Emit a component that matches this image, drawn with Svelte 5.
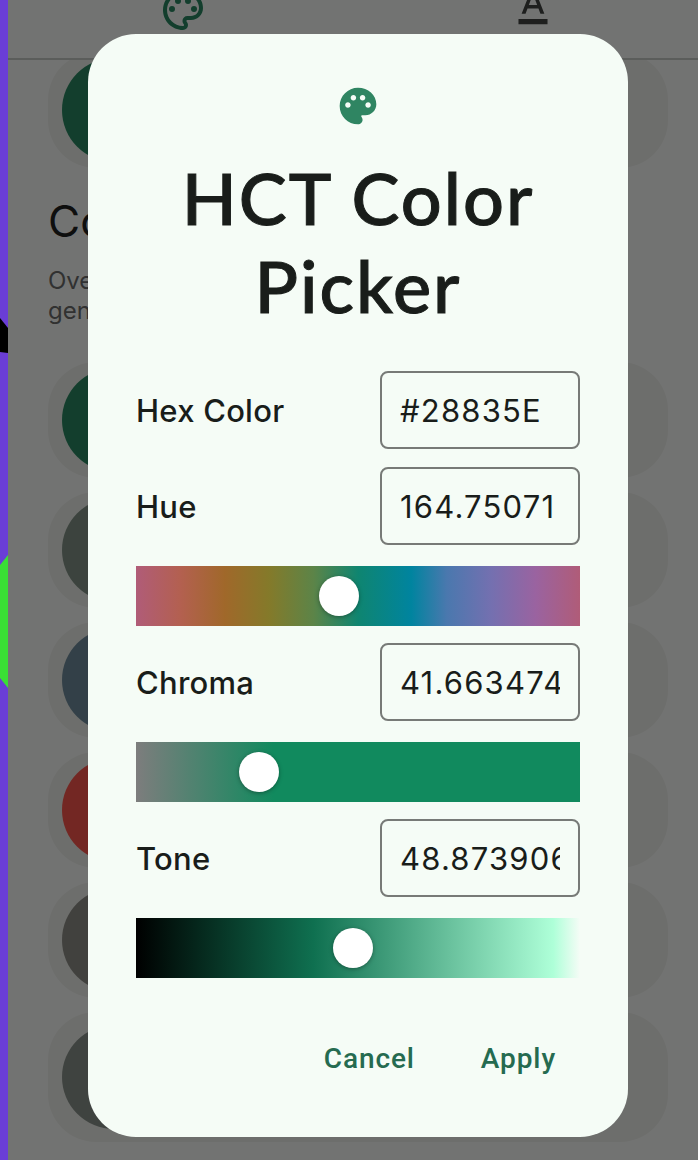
<script>
  const swatches = [
    { color: '#7d8d82', tall: false },
    { color: '#6c8796', tall: false },
    { color: '#f05349', tall: false },
    { color: '#898983', tall: false },
    { color: '#858c87', tall: true }
  ];

  const fields = [
    { label: 'Hex Color', value: '#28835E' },
    { label: 'Hue', value: '164.75071', slider: 'hue', pos: 164.75071 / 360 },
    { label: 'Chroma', value: '41.663474', slider: 'chroma', pos: 41.663474 / 150 },
    { label: 'Tone', value: '48.873906', slider: 'tone', pos: 48.873906 / 100 }
  ];

  const palette = 'M12 2C6.49 2 2 6.49 2 12s4.49 10 10 10c1.38 0 2.5-1.12 2.5-2.5 0-.61-.23-1.2-.64-1.67-.08-.1-.13-.21-.13-.33 0-.28.22-.5.5-.5H16c3.31 0 6-2.69 6-6 0-4.96-4.49-9-10-9zm5.5 11c-.83 0-1.5-.67-1.5-1.5s.67-1.5 1.5-1.5 1.5.67 1.5 1.5-.67 1.5-1.5 1.5zm-3-4c-.83 0-1.5-.67-1.5-1.5S13.67 6 14.5 6s1.5.67 1.5 1.5S15.33 9 14.5 9zM5 11.5c0-.83.67-1.5 1.5-1.5s1.5.67 1.5 1.5S7.33 13 6.5 13 5 12.33 5 11.5zm6-4c0 .83-.67 1.5-1.5 1.5S8 8.33 8 7.5 8.67 6 9.5 6s1.5.67 1.5 1.5z';
</script>

<div class="stage">
  <svg class="rail" viewBox="0 0 8 1160" width="8" height="1160" aria-hidden="true">
    <rect width="8" height="1160" fill="#6a3dd6" />
    <path d="M0 318 L8 328 V353 L0 352 Z" fill="#000" />
    <path d="M0 565 L8 555 V688 L0 678 Z" fill="#3adf35" />
  </svg>

  <div class="app">
    <header class="tabs">
      <svg class="tab-palette" viewBox="0 0 24 24" width="48" height="48" aria-hidden="true">
        <path d="M12 22C6.49 22 2 17.51 2 12S6.49 2 12 2s10 4.04 10 9c0 3.31-2.69 6-6 6h-1.77c-.28 0-.5.22-.5.5 0 .12.05.23.13.33.41.47.64 1.06.64 1.67A2.5 2.5 0 0 1 12 22zm0-18c-4.41 0-8 3.59-8 8s3.59 8 8 8c.28 0 .5-.22.5-.5a.54.54 0 0 0-.14-.35c-.41-.46-.63-1.05-.63-1.65a2.5 2.5 0 0 1 2.5-2.5H16c2.21 0 4-1.79 4-4 0-3.86-3.59-7-8-7z" />
        <circle cx="6.5" cy="11.5" r="1.5" />
        <circle cx="9.5" cy="7.5" r="1.5" />
        <circle cx="14.5" cy="7.5" r="1.5" />
        <circle cx="17.5" cy="11.5" r="1.5" />
      </svg>
      <svg class="tab-type" viewBox="0 0 24 24" width="42" height="42" aria-hidden="true">
        <path d="M11 3L5.5 17h2.25l1.12-3h6.25l1.12 3h2.25L13 3h-2zm-1.38 9L12 5.67 14.38 12H9.62z" />
        <rect x="3.7" y="20" width="16.6" height="3" />
      </svg>
    </header>

    <main class="content">
      <div class="card first"><span class="dot primary"></span></div>
      <h2 class="heading">Color scheme</h2>
      <p class="intro">
        <span>Override the colors of the default theme that are</span>
        <span>generated from the seed color.</span>
      </p>
      <div class="list">
        <div class="card"><span class="dot primary"></span></div>
        {#each swatches as s}
          <div class="card" class:tall={s.tall}>
            <span class="dot" style:background={s.color}></span>
          </div>
        {/each}
      </div>
    </main>

    <div class="scrim"></div>
  </div>

  <div class="dialog">
    <svg class="dialog-icon" viewBox="0 0 24 24" width="44" height="44" aria-hidden="true">
      <path d={palette} />
    </svg>
    <h1 class="title">HCT Color<br />Picker</h1>

    <div class="form">
      {#each fields as f}
        <div class="field">
          <label class="label" for={f.label}>{f.label}</label>
          <input class="input" id={f.label} value={f.value} readonly />
        </div>
        {#if f.slider}
          <div class="track {f.slider}">
            <span class="thumb" style:left="{f.pos * 100}%"></span>
          </div>
        {/if}
      {/each}
    </div>

    <div class="actions">
      <button class="btn">Cancel</button>
      <button class="btn">Apply</button>
    </div>
  </div>
</div>

<style>
  :global(body) {
    margin: 0;
  }

  .stage {
    position: relative;
    display: flex;
    width: 698px;
    height: 1160px;
    overflow: hidden;
    font-family: 'Inter', 'Liberation Sans', sans-serif;
  }

  .rail {
    flex: none;
    display: block;
  }

  .app {
    position: relative;
    flex: 1;
    display: flex;
    flex-direction: column;
    min-width: 0;
    background: #eff1ef;
    overflow: hidden;
  }

  .scrim {
    position: absolute;
    inset: 0;
    z-index: 2;
    background: rgba(0, 0, 0, 0.52);
  }

  .tabs {
    flex: none;
    box-sizing: border-box;
    height: 60px;
    display: flex;
    justify-content: space-between;
    align-items: flex-end;
    padding: 0 144px 0 151px;
    border-bottom: 2px solid #bfc3bf;
    background: #eff1ef;
    position: relative;
    z-index: 1;
  }

  .tab-palette {
    flex: none;
    margin-bottom: 24px;
    fill: #28835e;
  }

  .tab-type {
    flex: none;
    margin-bottom: 32px;
    fill: #3f4240;
  }

  .content {
    flex: 1;
    margin-top: -8px;
    padding: 0 30px 0 40px;
    min-height: 0;
  }

  .card {
    box-sizing: border-box;
    height: 116px;
    display: flex;
    align-items: center;
    padding-left: 14px;
    border-radius: 48px;
    background: #e4e6e1;
  }

  .card.tall {
    height: 130px;
  }

  .dot {
    flex: none;
    width: 104px;
    height: 104px;
    border-radius: 50%;
  }

  .dot.primary {
    background: #28835e;
  }

  .heading {
    margin: 25px 0 0;
    font-size: 44px;
    line-height: 56px;
    font-weight: 400;
    color: #1e201e;
    white-space: nowrap;
  }

  .intro {
    margin: 17px 0 0;
    font-size: 24px;
    line-height: 30px;
    color: #666866;
    white-space: nowrap;
  }

  .intro span {
    display: block;
  }

  .list {
    margin-top: 36px;
    display: flex;
    flex-direction: column;
    gap: 14px;
  }

  .dialog {
    position: absolute;
    left: 88px;
    top: 34px;
    box-sizing: border-box;
    width: 540px;
    height: 1103px;
    display: flex;
    flex-direction: column;
    padding: 50px 48px 0;
    border-radius: 48px;
    background: #f5fcf6;
    z-index: 3;
  }

  .dialog-icon {
    flex: none;
    align-self: center;
    fill: #2f8562;
  }

  .title {
    margin: 25px 0 0;
    font-family: 'Lato', 'Liberation Sans', sans-serif;
    font-size: 72px;
    line-height: 88px;
    font-weight: 500;
    letter-spacing: 2px;
    -webkit-text-stroke: 1px #191d1a;
    text-align: center;
    color: #191d1a;
  }

  .form {
    margin-top: 42px;
    display: flex;
    flex-direction: column;
  }

  .field {
    display: flex;
    align-items: center;
    justify-content: space-between;
    height: 78px;
    margin-bottom: 18px;
  }

  .label {
    font-size: 31px;
    font-weight: 500;
    letter-spacing: 0.25px;
    color: #191d1a;
  }

  .input {
    box-sizing: border-box;
    width: 200px;
    height: 78px;
    padding: 0 18px;
    border: 2px solid #777a77;
    border-radius: 8px;
    background: transparent;
    font: 400 31px 'Inter', 'Liberation Sans', sans-serif;
    letter-spacing: 1.2px;
    color: #191d1a;
    outline: none;
  }

  .track {
    position: relative;
    height: 60px;
    margin: 3px 0 17px;
  }

  .track.hue {
    background: linear-gradient(90deg, #b05c78 0%, #b36050 10%, #a0682a 20%, #847a2a 30%, #5c8448 40%, #0f8570 50%, #00849f 62%, #4a78ae 70%, #7470b0 80%, #9a63a0 90%, #b05c78 100%);
  }

  .track.chroma {
    background: linear-gradient(90deg, #7d7d7d 0%, #118a5e 31%, #118a5e 100%);
  }

  .track.tone {
    background: linear-gradient(90deg, #000 0%, #0f7050 40%, #aeffd8 94%, #f5fcf6 100%);
  }

  .thumb {
    position: absolute;
    top: 50%;
    width: 40px;
    height: 40px;
    border-radius: 50%;
    background: #fff;
    box-shadow: 0 1px 4px rgba(0, 0, 0, 0.35);
    transform: translate(-50%, -50%);
  }

  .actions {
    display: flex;
    justify-content: flex-end;
    gap: 18px;
    margin-top: 31px;
  }

  .btn {
    height: 64px;
    padding: 0 24px;
    border: 0;
    background: transparent;
    font: 500 28px 'Roboto', 'Liberation Sans', sans-serif;
    letter-spacing: 0.9px;
    color: #256b50;
  }
</style>
